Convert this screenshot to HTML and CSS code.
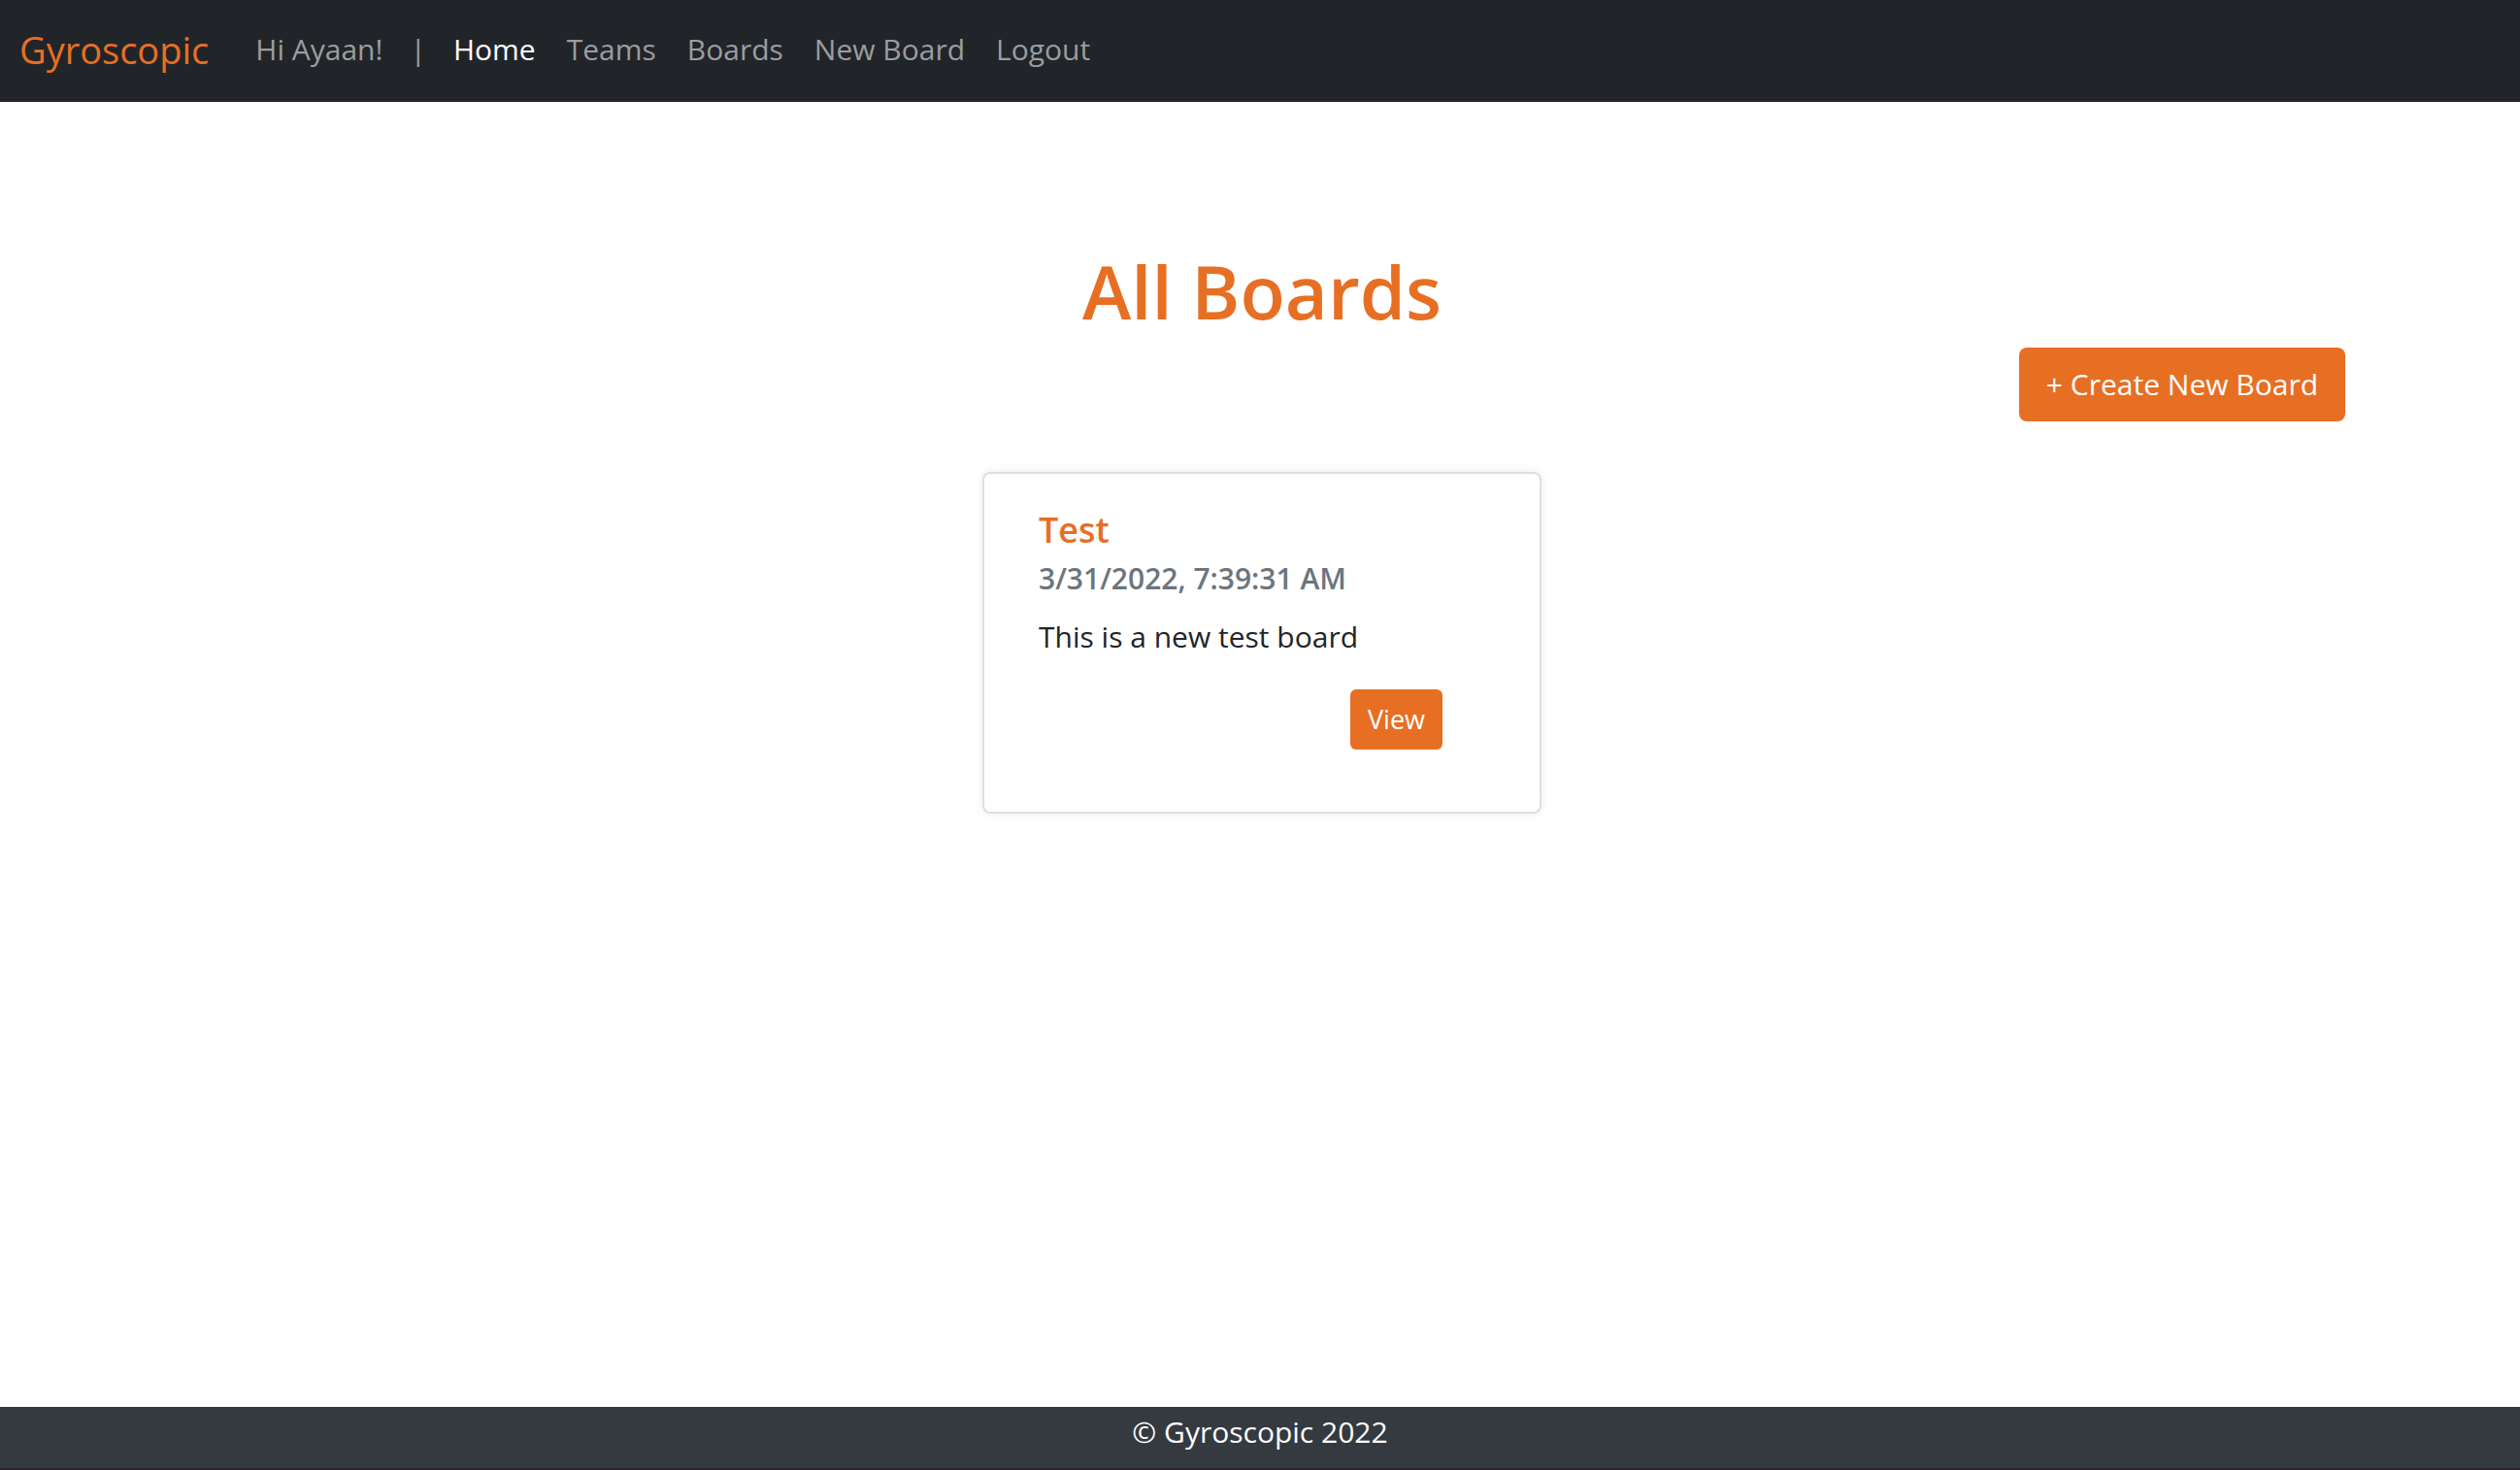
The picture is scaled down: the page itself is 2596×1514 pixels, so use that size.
FILE: index.html
```html
<!DOCTYPE html>
<html lang="en">
<head>
  <meta charset="utf-8">
  <meta name="viewport" content="width=device-width, initial-scale=1">
  <title>Gyroscopic</title>
  <link rel="stylesheet" href="styles.css">
</head>
<body>
  <header class="navbar">
    <a class="brand" href="#">Gyroscopic</a>
    <nav class="nav">
      <span class="nav-item">Hi Ayaan!</span>
      <span class="nav-item nav-divider">|</span>
      <a class="nav-item nav-active" href="#" aria-current="page">Home</a>
      <a class="nav-item" href="#">Teams</a>
      <a class="nav-item" href="#">Boards</a>
      <a class="nav-item" href="#">New Board</a>
      <a class="nav-item" href="#">Logout</a>
    </nav>
  </header>
  <main class="content">
    <h1 class="page-title">All Boards</h1>
    <div class="toolbar">
      <button class="btn" type="button">+ Create New Board</button>
    </div>
    <article class="card">
      <h2 class="card-title">Test</h2>
      <p class="card-date">3/31/2022, 7:39:31 AM</p>
      <p class="card-text">This is a new test board</p>
      <div class="card-actions">
        <button class="btn btn-small" type="button">View</button>
      </div>
    </article>
  </main>
  <footer class="footer">© Gyroscopic 2022</footer>
</body>
</html>
```
FILE: styles.css
```css
* {
  box-sizing: border-box;
}

body {
  margin: 0;
  min-height: 100vh;
  display: flex;
  flex-direction: column;
  background: #fff;
  color: #212529;
  font-family: "Open Sans", "Noto Sans", sans-serif;
  font-size: 30px;
  line-height: 48px;
}

h1, h2, p {
  margin: 0;
}

.navbar {
  display: flex;
  align-items: center;
  gap: 32px;
  min-height: 105px;
  padding: 0 20px 4px;
  background: #212529;
}

.brand {
  color: #e76f24;
  font-size: 38px;
  text-decoration: none;
}

.nav {
  display: flex;
}

.nav-item {
  padding: 16px;
  color: #9b9d9f;
  text-decoration: none;
}

.nav-divider {
  padding: 16px 12px;
}

.nav-active {
  color: #fff;
}

.content {
  flex: 1;
  padding: 147px 180px 48px 184px;
}

.page-title {
  color: #e76f24;
  font-size: 76px;
  font-weight: 600;
  line-height: 96px;
  text-align: center;
}

.toolbar {
  display: flex;
  justify-content: flex-end;
  margin-top: 10px;
}

.btn {
  padding: 14px 28px;
  border: 0;
  border-radius: 8px;
  background: #e76f24;
  color: #fff;
  font: inherit;
}

.btn-small {
  padding: 10px 18px;
  border-radius: 6px;
  font-size: 27px;
  line-height: 42px;
}

.card {
  width: 576px;
  min-height: 352px;
  margin: 52px auto 0;
  padding: 34px 56px;
  border: 2px solid #dedede;
  border-radius: 8px;
  box-shadow: 0 0 10px rgba(0, 0, 0, 0.08);
}

.card-title {
  color: #e76f24;
  font-size: 36px;
  font-weight: 600;
}

.card-date {
  margin-top: 2px;
  color: #6c757d;
  font-weight: 600;
}

.card-text {
  margin-top: 12px;
}

.card-actions {
  display: flex;
  justify-content: flex-end;
  margin-top: 30px;
  padding-right: 44px;
}

.footer {
  min-height: 65px;
  padding-top: 2px;
  border-bottom: 2px solid #2c262c;
  background: #343a40;
  color: #fff;
  text-align: center;
}
```
